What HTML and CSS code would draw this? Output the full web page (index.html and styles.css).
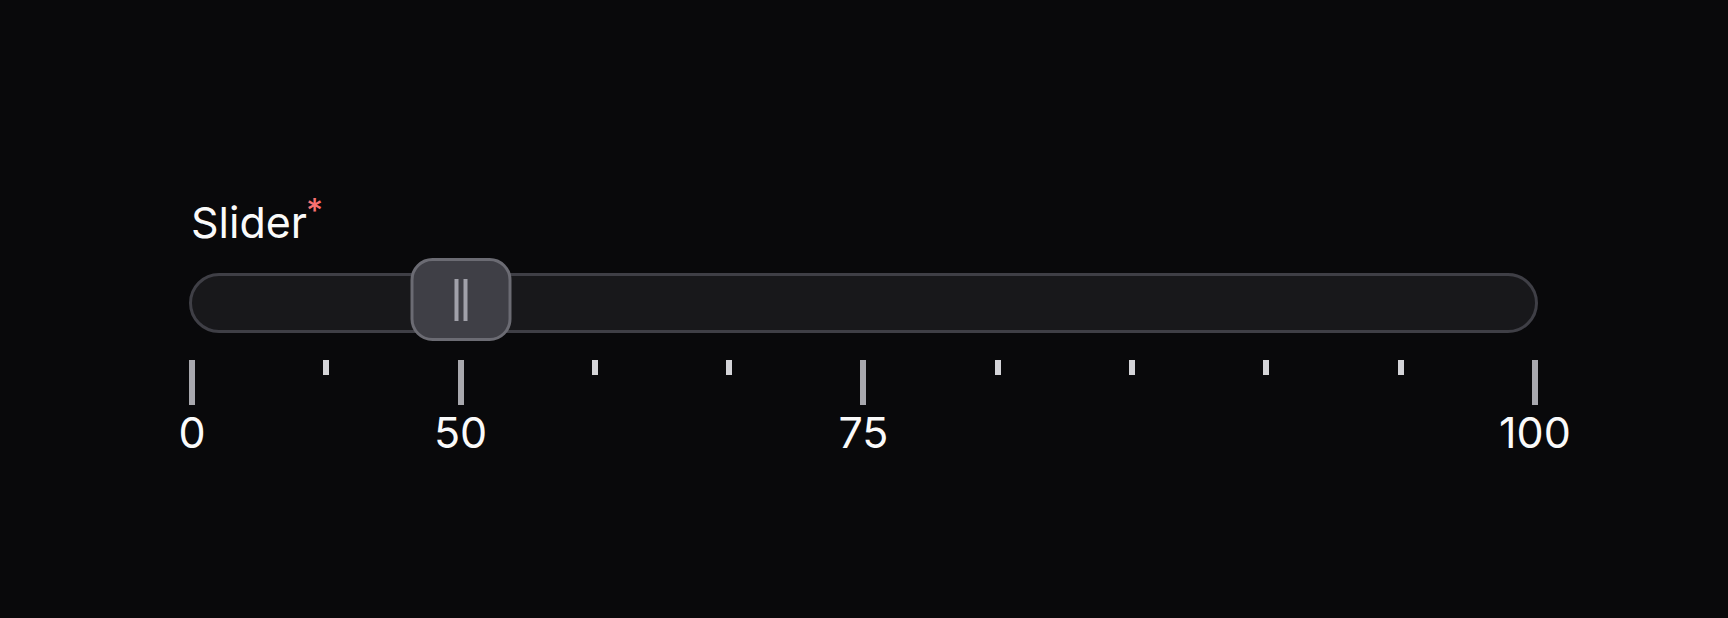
FILE: index.html
```html
<!DOCTYPE html>
<html lang="en">
<head>
<meta charset="utf-8">
<title>Slider</title>
<link rel="stylesheet" href="styles.css">
</head>
<body>
<main class="page">
  <div class="field">
    <label class="label">Slider<span class="req">*</span></label>
    <div class="track">
      <div class="thumb" style="left: 20%;">
        <span class="grip"></span><span class="grip"></span>
      </div>
    </div>
    <div class="ticks">
      <div class="tick major"><span class="bar"></span><span class="num">0</span></div>
      <div class="tick"><span class="bar"></span></div>
      <div class="tick major"><span class="bar"></span><span class="num">50</span></div>
      <div class="tick"><span class="bar"></span></div>
      <div class="tick"><span class="bar"></span></div>
      <div class="tick major"><span class="bar"></span><span class="num">75</span></div>
      <div class="tick"><span class="bar"></span></div>
      <div class="tick"><span class="bar"></span></div>
      <div class="tick"><span class="bar"></span></div>
      <div class="tick"><span class="bar"></span></div>
      <div class="tick major"><span class="bar"></span><span class="num">100</span></div>
    </div>
  </div>
</main>
</body>
</html>
```
FILE: styles.css
```css
* { box-sizing: border-box; }
html, body {
  margin: 0;
  padding: 0;
  background: #09090b;
  height: 100%;
}
body {
  font-family: Inter, "Noto Sans", sans-serif;
  color: #fafafa;
}
.page {
  padding: 197px 0 0 189px;
}
.field {
  width: 1349px;
  display: flex;
  flex-direction: column;
}
.label {
  font-size: 43px;
  line-height: 50px;
  padding-left: 2px;
  font-weight: 400;
  color: #fafafa;
}
.req {
  color: #f87171;
  font-size: 33px;
  font-weight: 500;
  vertical-align: top;
  line-height: 30px;
  margin-left: -1px;
  position: relative;
  top: -2px;
}
.track {
  position: relative;
  margin-top: 26px;
  height: 60px;
  border: 3px solid #3f3f46;
  border-radius: 30px;
  background: #18181b;
}
.thumb {
  position: absolute;
  top: -18px;
  width: 101px;
  height: 83px;
  transform: translateX(-50%);
  background: #3f3f46;
  border: 3px solid #6b6b73;
  border-radius: 22px;
  display: flex;
  justify-content: center;
  align-items: center;
  gap: 5px;
}
.grip {
  width: 4px;
  height: 42px;
  background: #a1a1aa;
}
.ticks {
  margin-top: 27px;
  display: flex;
  justify-content: space-between;
}
.tick {
  width: 6px;
  display: flex;
  flex-direction: column;
  align-items: center;
}
.bar {
  width: 6px;
  height: 15px;
  background: #d4d4d8;
}
.tick.major .bar {
  height: 45px;
  background: #a8a8ae;
}
.num {
  margin-top: 3px;
  font-size: 43px;
  line-height: 48px;
  color: #fafafa;
  white-space: nowrap;
}
```
